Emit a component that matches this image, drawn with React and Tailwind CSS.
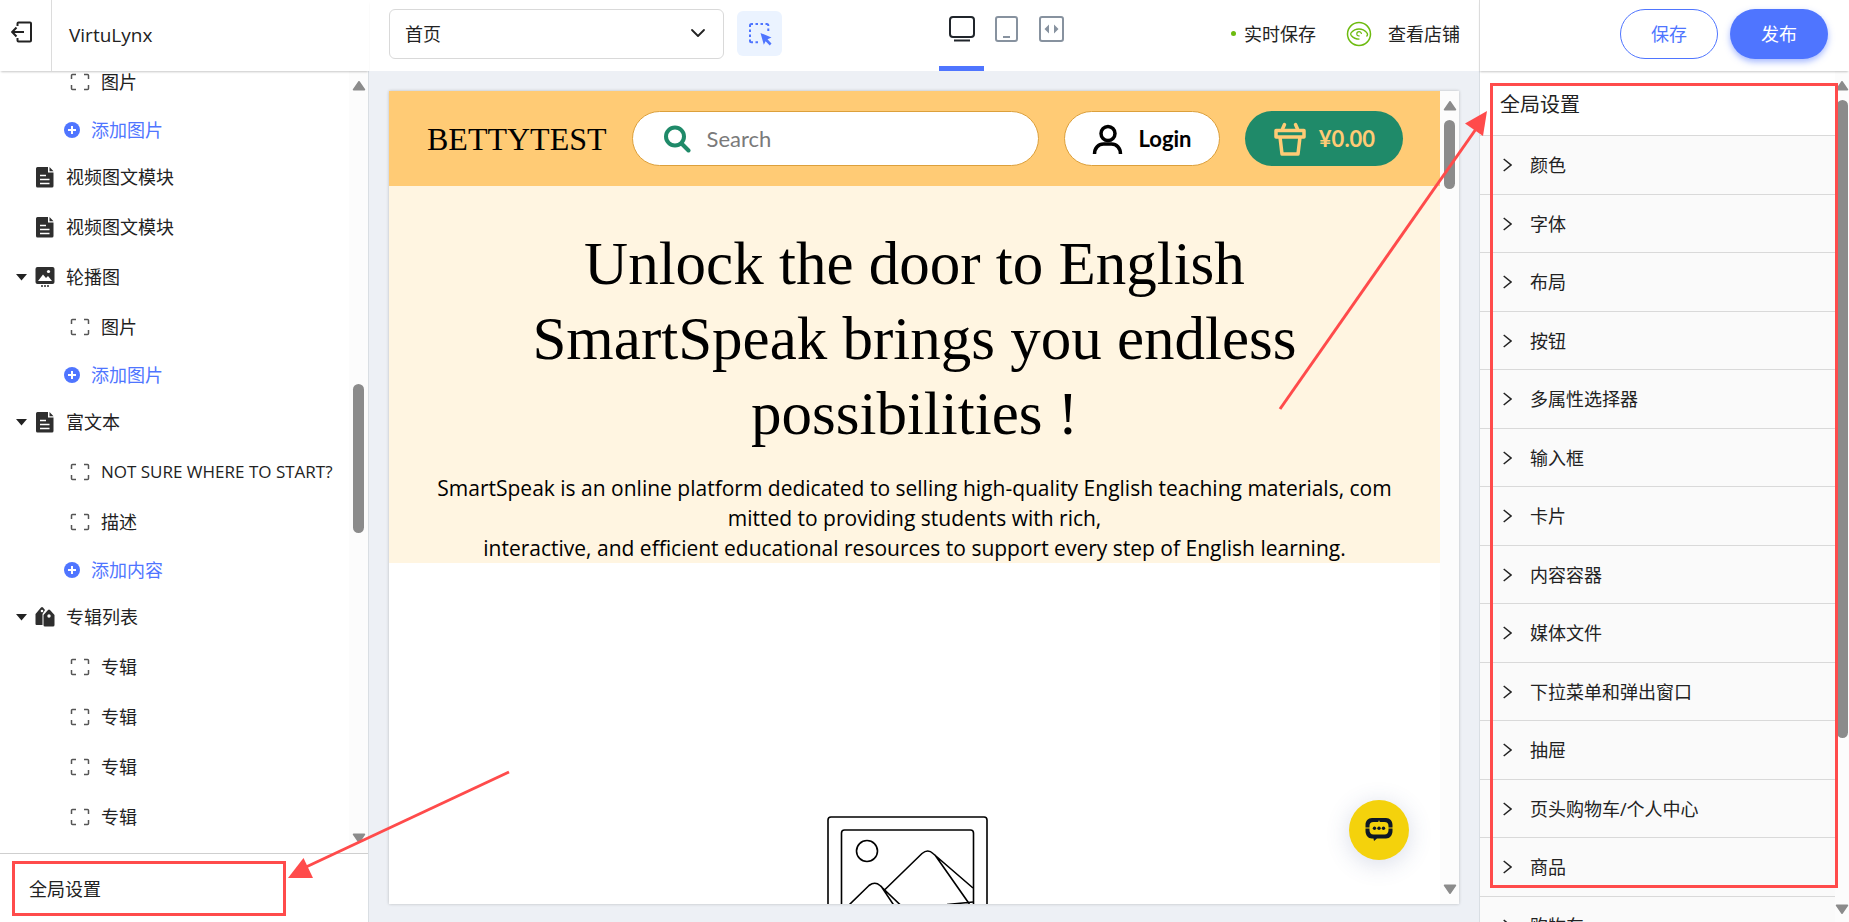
import { useState } from 'react';
import { ChevronDown } from 'lucide-react'


const sections = [
  { type: 'child', label: '图片' },
  { type: 'add', label: '添加图片' },
  { type: 'section', icon: 'file', label: '视频图文模块' },
  { type: 'section', icon: 'file', label: '视频图文模块' },
  { type: 'section', icon: 'slides', label: '轮播图', open: true },
  { type: 'child', label: '图片' },
  { type: 'add', label: '添加图片' },
  { type: 'section', icon: 'file', label: '富文本', open: true },
  { type: 'child', label: 'NOT SURE WHERE TO START?', latin: true },
  { type: 'child', label: '描述' },
  { type: 'add', label: '添加内容' },
  { type: 'section', icon: 'tags', label: '专辑列表', open: true },
  { type: 'child', label: '专辑' },
  { type: 'child', label: '专辑' },
  { type: 'child', label: '专辑' },
  { type: 'child', label: '专辑' },
]

const settings = [
  '颜色',
  '字体',
  '布局',
  '按钮',
  '多属性选择器',
  '输入框',
  '卡片',
  '内容容器',
  '媒体文件',
  '下拉菜单和弹出窗口',
  '抽屉',
  '页头购物车/个人中心',
  '商品',
  '购物车',
]


/* Icons */

function ExitIcon() {
  return (
    <svg width="22" height="22" viewBox="0 0 22 22" fill="none" stroke="#222" strokeWidth="2">
      <path d="M6.500 5V2.500a1 1 0 0 1 1-1H19a1 1 0 0 1 1 1v17a1 1 0 0 1-1 1H7.500a1 1 0 0 1-1-1V17" />
      <path d="M13 11H1.500M5.500 6.500L1.200 11l4.300 4.500" />
    </svg>
  )
}

function FileIcon() {
  return (
    <svg width="20" height="22" viewBox="0 0 20 22">
      <path fill="#2e2e2e" d="M2.500 1H13v5.500h5.500V20a1.500 1.500 0 0 1-1.500 1.500H2.500A1.500 1.500 0 0 1 1 20V2.500A1.500 1.500 0 0 1 2.500 1zM14.500 1l4 4.200h-4z" />
      <path stroke="#fff" strokeWidth="1.400" d="M5 9.500h6M5 13.500h9.500M5 17.500h9.500" />
    </svg>
  )
}

function SlidesIcon() {
  return (
    <svg width="20" height="22" viewBox="0 0 20 22">
      <rect x="0.500" y="1" width="19" height="17" rx="2" fill="#2e2e2e" />
      <path fill="#fff" d="M3 15l5-6.500 3 3.500 2-2 4 5z" />
      <circle cx="13.500" cy="5.500" r="1.600" fill="#fff" />
      <path stroke="#2e2e2e" strokeWidth="1.500" strokeDasharray="2 1" d="M6 20h8.500" />
    </svg>
  )
}

function TagsIcon() {
  return (
    <svg width="20" height="22" viewBox="0 0 20 22">
      <path fill="#2e2e2e" d="M0.500 8L6 1.500a1.500 1.500 0 0 1 2 0L10 4 7.500 8v11H1.500a1 1 0 0 1-1-1z" />
      <path fill="#2e2e2e" d="M8.500 9L13 4a1.500 1.500 0 0 1 2 0l4.500 5v10a1.500 1.500 0 0 1-1.500 1.500h-8A1.500 1.500 0 0 1 8.500 19z" />
      <circle cx="7" cy="5" r="1.300" fill="#fff" />
      <circle cx="14" cy="10" r="1.700" fill="#fff" />
    </svg>
  )
}

function FrameIcon() {
  return (
    <svg width="20" height="18" viewBox="0 0 20 18" fill="none" stroke="#555" strokeWidth="1.500">
      <path d="M1.500 6V2.500a1 1 0 0 1 1-1H6M14 1.500h3.500a1 1 0 0 1 1 1V6M18.500 12v3.500a1 1 0 0 1-1 1H14M6 16.500H2.500a1 1 0 0 1-1-1V12" />
    </svg>
  )
}

function PlusIcon() {
  return (
    <svg width="16" height="16" viewBox="0 0 16 16">
      <circle cx="8" cy="8" r="8" fill="#4f75ff" />
      <path stroke="#fff" strokeWidth="2" d="M8 4v8M4 8h8" />
    </svg>
  )
}

function PickIcon() {
  return (
    <svg width="24" height="24" viewBox="0 0 24 24" fill="none" stroke="#4f75ff" strokeWidth="2">
      <path d="M2 5V3.500A1.500 1.500 0 0 1 3.500 2H5M7.500 2H10M12.500 2H15M17.500 2h1.300a1.500 1.500 0 0 1 1.500 1.500V4M20.300 6.500V9M2 7.500V10M2 12.500V15M2 17.500v1.300a1.500 1.500 0 0 0 1.500 1.500H5M7.500 20.300H10" />
      <path fill="#4f75ff" stroke="none" d="M12.500 11l11 4.500-4 1.800 4 4.300-1.700 1.800-4.200-4.200-1.800 3.500z" />
    </svg>
  )
}

function DesktopIcon() {
  return (
    <svg width="26" height="26" viewBox="0 0 26 26" fill="none" stroke="#20252b" strokeWidth="2">
      <rect x="1" y="1" width="24" height="20" rx="3" />
      <path d="M5 24.500h16" />
    </svg>
  )
}

function TabletIcon() {
  return (
    <svg width="24" height="26" viewBox="0 0 24 26" fill="none" stroke="#87929f" strokeWidth="2">
      <rect x="1" y="1" width="21" height="24" rx="2" />
      <path d="M8 21h7" />
    </svg>
  )
}

function CodeIcon() {
  return (
    <svg width="26" height="26" viewBox="0 0 26 26">
      <rect x="1" y="1" width="23" height="24" rx="2" fill="none" stroke="#87929f" strokeWidth="2" />
      <path fill="#87929f" d="M5.500 13l4.500-4.500v9zM19.500 13L15 8.500v9z" />
    </svg>
  )
}

function EyeIcon() {
  return (
    <svg width="26" height="26" viewBox="0 0 26 26" fill="none" stroke="#6dbb0f" strokeWidth="1.500">
      <circle cx="13" cy="13" r="11.500" />
      <path d="M20.500 15.500c1.500-1.500 1.300-2.700.3-3.800C18.500 9 15.800 8 13 8s-5.500 1-7.800 3.700c-.8 1-.8 1.800 0 2.800C7.300 17 10 18.200 13.500 18.200" strokeWidth="1.300" />
      <path d="M13.600 14.800c-1.600.4-2.800-.5-2.800-1.900 0-1.300 1-2.200 2.300-2.200 1.400 0 2.400 1 2.300 2.300" strokeWidth="1.200" />
    </svg>
  )
}

function SearchIcon() {
  return (
    <svg width="28" height="28" viewBox="0 0 28 28" fill="none" stroke="#1f8a69" strokeWidth="4" className="shrink-0">
      <circle cx="12" cy="11.500" r="9" />
      <path strokeLinecap="round" d="M18.500 18.500l7 7" />
    </svg>
  )
}

function UserIcon() {
  return (
    <svg width="32" height="32" viewBox="0 0 32 32" fill="none" stroke="#000" strokeWidth="3.500">
      <circle cx="16" cy="10.500" r="7" />
      <path d="M2.500 31c0-6 4-10 9-10h8c5 0 9 4 9 10" />
    </svg>
  )
}

function BasketIcon() {
  return (
    <svg width="34" height="34" viewBox="0 0 34 34" fill="none" stroke="#ffcb75" strokeWidth="3.500" strokeLinejoin="round">
      <path d="M3 8.500h28v6.500H3zM7 15l2 17h16l2-17" />
      <path strokeLinecap="round" d="M9.500 7l2-4.500M24.500 7l-2-4.500" />
    </svg>
  )
}

function ChatIcon() {
  return (
    <svg width="30" height="26" viewBox="0 0 30 26">
      <path fill="#0d1726" fillRule="evenodd" d="M8 1h14c4 0 6.500 3 6.500 7v6c0 4-2.500 7.500-6.500 7.500h-9L10 24l-.5-2.500H8c-4 0-6.500-3.500-6.500-7.500V8c0-4 2.500-7 6.500-7zM9.500 5C6.800 5 5.500 6.500 5.500 9v4c0 2.500 1.300 4.500 4 4.500h11c2.700 0 4-2 4-4.500V9c0-2.500-1.300-4-4-4z" />
      <path stroke="#f4d20c" strokeWidth="1.200" d="M0 11h6M24 11h6" />
      <path fill="#f4d20c" d="M14 5.500l1-2.500 1 2.500z" />
      <circle cx="10.500" cy="11.200" r="1.700" fill="#0d1726" />
      <circle cx="15" cy="11.200" r="1.700" fill="#0d1726" />
      <circle cx="19.500" cy="11.200" r="1.700" fill="#0d1726" />
    </svg>
  )
}

function PlaceholderImage() {
  return (
    <svg className="shrink-0" width="162" height="162" viewBox="0 0 162 162" fill="none" stroke="#000" strokeWidth="1.600">
      <rect x="1" y="1" width="159" height="160" rx="3" />
      <rect x="14.500" y="14" width="132" height="134" rx="3" />
      <circle cx="40" cy="35" r="10.500" />
      <path d="M58 73.500L95 37.500q6-5 11 0L146 72M108 39l34 48.500L146 98M22 89l20-19.500q6-4.500 11 0l22 21M54 70l20 30M120 88.500l26-2.500" />
    </svg>
  )
}

const icons = { file: FileIcon, slides: SlidesIcon, tags: TagsIcon }


/* Scroll bar drawn beside a scrolling panel */
function ScrollBar({ className, before, size, after }) {
  return (
    <div className={`flex flex-col items-center bg-[#fcfcfc] shrink-0 ${className}`}>
      <svg width="14" height="10" viewBox="0 0 14 10" className="shrink-0">
        <path fill="#8b8b8b" d="M6 .7a1.200 1.200 0 0 1 2 0l5 7.300a1 1 0 0 1-.8 1.500H1.800A1 1 0 0 1 1 8z" />
      </svg>
      <div className="flex-1 flex flex-col items-center py-2">
        <div style={{ flexGrow: before }} />
        <div className="w-[11px] rounded-full bg-[#8b8b8b]" style={{ flexGrow: size }} />
        <div style={{ flexGrow: after }} />
      </div>
      <svg width="14" height="10" viewBox="0 0 14 10" className="shrink-0">
        <path fill="#8b8b8b" d="M6 9.300a1.200 1.200 0 0 0 2 0L13 2A1 1 0 0 0 12.200.5H1.800A1 1 0 0 0 1 2z" />
      </svg>
    </div>
  )
}

function TreeRow({ item }) {
  if (item.type === 'add') {
    return (
      <li className="h-[45px] shrink-0 pl-16 flex items-center">
        <button className="flex items-center gap-[11px] text-[#4f75ff]">
          <PlusIcon />
          <span>{item.label}</span>
        </button>
      </li>
    )
  }

  if (item.type === 'child') {
    return (
      <li className="h-[50px] shrink-0 pl-[70px] flex items-center gap-[11px]">
        <FrameIcon />
        <span className={item.latin ? 'whitespace-nowrap text-[17px]' : 'whitespace-nowrap'}>{item.label}</span>
      </li>
    )
  }

  const Icon = icons[item.icon]
  return (
    <li className="h-[50px] shrink-0 pl-4 flex items-center">
      <span className="w-[19px]">
        {item.open && (
          <svg width="11" height="7" viewBox="0 0 11 7">
            <path fill="#222" d="M0 0h11L5.500 6.500z" />
          </svg>
        )}
      </span>
      <Icon />
      <span className="ml-[11px]">{item.label}</span>
    </li>
  )
}


export default function App() {
  const [page, setPage] = useState('首页');

  return (
    <div className="relative h-screen flex flex-col overflow-hidden bg-white text-[#222] text-[18px] leading-6 font-['Open_Sans','Noto_Sans_CJK_SC',sans-serif]">

      {/* Top bar */}
      <header className="h-[71px] shrink-0 flex">
        <div className="w-[369px] shrink-0 relative z-10 flex bg-white shadow-[0_2px_2px_-1px_rgba(0,0,0,0.22)]">
          <button aria-label="退出" className="w-[52px] pb-2 pr-2 flex items-center justify-center border-r border-[#dcdcdc]">
            <ExitIcon />
          </button>
          <h1 className="flex items-center pl-[17px] pb-0.5 text-[19px]">VirtuLynx</h1>
        </div>

        <div className="flex-1 flex items-center justify-between pl-5 pr-[19px] pb-1">
          <div className="flex items-center gap-[13px]">
            <div className="relative">
              <select
                aria-label="页面"
                value={page}
                onChange={(e) => setPage(e.target.value)}
                className="w-[335px] h-[50px] pl-[15px] rounded-md border border-[#d9d9d9] bg-white appearance-none"
              >
                <option>首页</option>
              </select>
              <ChevronDown size={24} strokeWidth={1.800} className="absolute right-3.5 top-3 pointer-events-none" />
            </div>
            <button aria-label="选择元素" className="w-[45px] h-[45px] rounded-md bg-[#ebf3ff] flex items-center justify-center">
              <PickIcon />
            </button>
          </div>

          <div className="flex self-stretch -mb-1">
            <button aria-label="桌面" className="w-[45px] pt-4 flex justify-center items-start border-b-[5px] border-[#4f75ff]">
              <DesktopIcon />
            </button>
            <button aria-label="平板" className="w-[45px] pt-4 flex justify-center items-start">
              <TabletIcon />
            </button>
            <button aria-label="代码" className="w-[45px] pt-4 flex justify-center items-start">
              <CodeIcon />
            </button>
          </div>

          <div className="flex items-center">
            <span className="w-[5px] h-[5px] rounded-full bg-[#6dbb0f] mr-2"></span>
            <span className="mr-[30px]">实时保存</span>
            <a href="#store" className="flex items-center gap-4">
              <EyeIcon />
              <span>查看店铺</span>
            </a>
          </div>
        </div>

        <div className="w-[370px] shrink-0 relative z-10 flex items-center justify-end gap-3 pr-[21px] pb-1 bg-white border-l border-[#dcdcdc] shadow-[0_2px_2px_-1px_rgba(0,0,0,0.22)]">
          <button className="w-[98px] h-[50px] rounded-full border border-[#4f75ff] text-[#4f75ff]">保存</button>
          <button className="w-[98px] h-[50px] rounded-full bg-[#4f75ff] text-white shadow-[0_3px_6px_rgba(79,117,255,0.5)]">发布</button>
        </div>
      </header>

      <div className="flex-1 min-h-0 flex">

        {/* Section tree */}
        <aside className="w-[369px] shrink-0 flex flex-col border-r border-[#d9dee3]">
          <div className="flex-1 min-h-0 flex overflow-hidden">
            <ul className="flex-1 min-w-0 flex flex-col -mt-[14px]">
              {sections.map((item, i) => <TreeRow key={i} item={item} />)}
            </ul>
            <ScrollBar className="w-[19px] py-[10px]" before={285} size={149} after={292} />
          </div>
          <div className="h-[69px] shrink-0 pt-[7px] pl-3 border-t border-[#cfcfcf]">
            <button className="w-[274px] h-[55px] pl-3.5 text-left border-3 border-[#ff4b4b]">全局设置</button>
          </div>
        </aside>

        {/* Store preview */}
        <main className="flex-1 min-w-0 pt-5 pb-[18px] px-5 bg-[#edf0f5]">
          <div className="h-full flex bg-white shadow-[0_0_3px_rgba(0,0,0,0.22)]">
            <div className="relative flex-1 min-w-0 overflow-hidden flex flex-col items-center text-black">

              <div className="w-full h-[95px] shrink-0 pl-[38px] pr-[37px] flex items-center gap-[25px] bg-[#ffcb75]">
                <a href="#home" className="text-[32px] leading-10 font-['Liberation_Serif',serif]">BETTYTEST</a>
                <label className="flex-1 h-[55px] px-[30px] flex items-center gap-4 rounded-full border border-[#dca03c] bg-white">
                  <SearchIcon />
                  <input
                    type="text"
                    aria-label="Search"
                    placeholder="Search"
                    className="flex-1 min-w-0 text-[22px] font-['Lato',sans-serif] outline-none placeholder:text-[#7a7a7a]"
                  />
                </label>
                <button className="w-[156px] h-[55px] flex items-center justify-center gap-3.5 rounded-full border border-[#dca03c] bg-white text-[22px] font-bold font-['Lato',sans-serif]">
                  <UserIcon />
                  Login
                </button>
                <button className="w-[158px] h-[55px] flex items-center justify-center gap-3 rounded-full bg-[#1f8a69] text-[#ffcb75] text-[22px] font-bold font-['Lato',sans-serif]">
                  <BasketIcon />
                  ¥0.00
                </button>
              </div>

              <section className="w-full shrink-0 pt-10 bg-[#fff5e1] text-center">
                <h2 className="text-[61px] leading-[75px] font-['Liberation_Serif',serif]">
                  Unlock the door to English<br />
                  SmartSpeak brings you endless<br />
                  possibilities !
                </h2>
                <p className="mt-[22px] text-[21px] leading-[30px]">
                  SmartSpeak is an online platform dedicated to selling high-quality English teaching materials, com<br />
                  mitted to providing students with rich,<br />
                  interactive, and efficient educational resources to support every step of English learning.
                </p>
              </section>

              <div className="pt-[253px] shrink-0 pr-3.5">
                <PlaceholderImage />
              </div>

              <button aria-label="聊天" className="absolute right-[31px] bottom-[44px] w-[60px] h-[60px] rounded-full bg-[#f4d20c] flex items-center justify-center shadow-[0_4px_24px_rgba(60,80,140,0.2)]">
                <ChatIcon />
              </button>
            </div>
            <ScrollBar className="w-[19px] py-[10px]" before={1} size={69} after={688} />
          </div>
        </main>

        {/* Global settings */}
        <aside className="relative w-[370px] shrink-0 flex overflow-hidden border-l border-[#d9dee3]">
          <div className="flex-1 min-w-0">
            <h2 className="h-[65px] pl-5 pb-5 flex items-end text-[20px] leading-5 border-b border-[#d9d9d9]">全局设置</h2>
            <ul>
              {settings.map((name) => (
                <li key={name} className="odd:h-[59px] even:h-[58px] border-b border-[#d9d9d9] bg-[#fafafa]">
                  <button className="w-full h-full pl-[23px] flex items-center gap-[18px]">
                    <svg width="9" height="14" viewBox="0 0 9 14" fill="none" stroke="#222" strokeWidth="1.500">
                      <path d="M.7 1L8 7 .7 13" />
                    </svg>
                    {name}
                  </button>
                </li>
              ))}
            </ul>
          </div>
          <ScrollBar className="w-[14px] pt-[10px] pb-2" before={1} size={640} after={158} />
          <div className="absolute left-[10px] right-[11px] top-[12px] bottom-[34px] border-3 border-[#ff4b4b] pointer-events-none"></div>
        </aside>
      </div>

      {/* Callout arrows */}
      <svg className="absolute left-[288px] bottom-[44px] pointer-events-none z-20" width="224" height="108" viewBox="0 0 224 108">
        <path stroke="#ff4b4b" strokeWidth="3" d="M221 2L18 97" />
        <path fill="#ff4b4b" d="M0 108L15.500 88 25 108z" />
      </svg>
      <svg className="absolute right-[361px] top-[111px] pointer-events-none z-20" width="210" height="300" viewBox="0 0 210 300">
        <path stroke="#ff4b4b" strokeWidth="3" d="M2 298L198 18" />
        <path fill="#ff4b4b" d="M209 0L187 12.500 205 25z" />
      </svg>
    </div>
  );
}
